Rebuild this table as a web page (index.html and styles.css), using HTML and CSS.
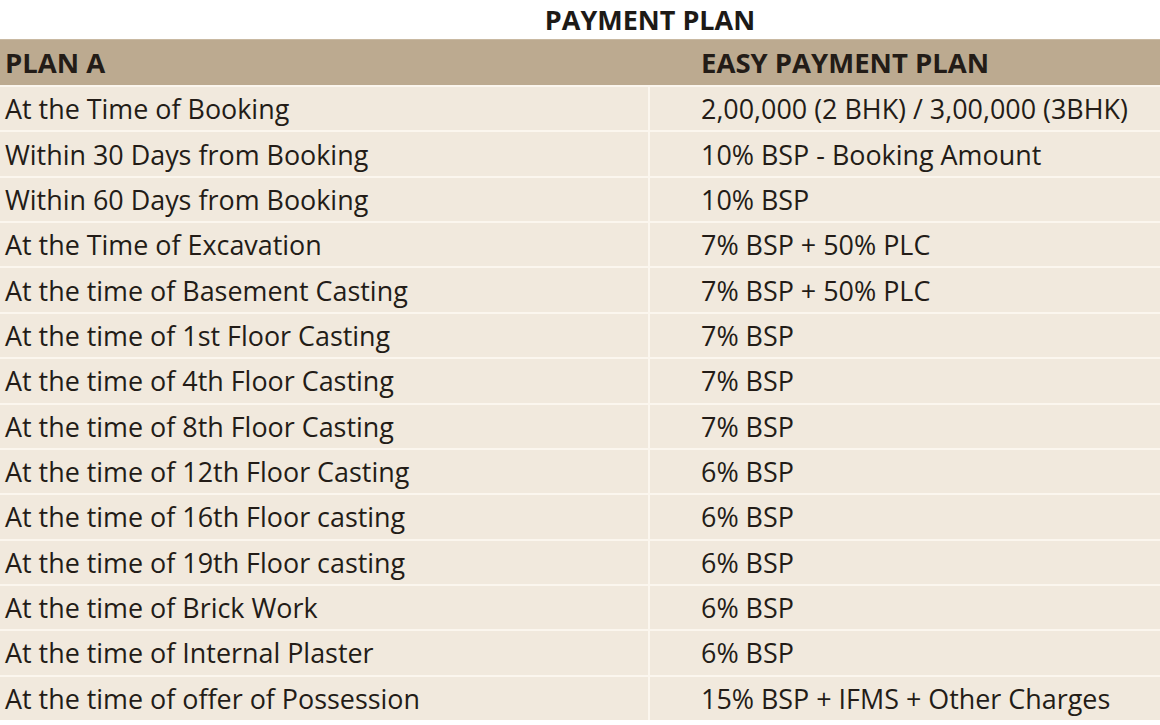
FILE: index.html
```html
<!DOCTYPE html>
<html>
<head>
<meta charset="utf-8">
<link rel="stylesheet" href="styles.css">
</head>
<body>
<div class="title">PAYMENT PLAN</div>
<div class="head">
  <div class="c1">PLAN A</div>
  <div class="c2">EASY PAYMENT PLAN</div>
</div>
<div class="rows">
  <div class="c1">At the Time of Booking</div><div class="c2">2,00,000 (2 BHK) / 3,00,000 (3BHK)</div>
  <div class="c1">Within 30 Days from Booking</div><div class="c2">10% BSP - Booking Amount</div>
  <div class="c1">Within 60 Days from Booking</div><div class="c2">10% BSP</div>
  <div class="c1">At the Time of Excavation</div><div class="c2">7% BSP + 50% PLC</div>
  <div class="c1">At the time of Basement Casting</div><div class="c2">7% BSP + 50% PLC</div>
  <div class="c1">At the time of 1st Floor Casting</div><div class="c2">7% BSP</div>
  <div class="c1">At the time of 4th Floor Casting</div><div class="c2">7% BSP</div>
  <div class="c1">At the time of 8th Floor Casting</div><div class="c2">7% BSP</div>
  <div class="c1">At the time of 12th Floor Casting</div><div class="c2">6% BSP</div>
  <div class="c1">At the time of 16th Floor casting</div><div class="c2">6% BSP</div>
  <div class="c1">At the time of 19th Floor casting</div><div class="c2">6% BSP</div>
  <div class="c1">At the time of Brick Work</div><div class="c2">6% BSP</div>
  <div class="c1">At the time of Internal Plaster</div><div class="c2">6% BSP</div>
  <div class="c1">At the time of offer of Possession</div><div class="c2">15% BSP + IFMS + Other Charges</div>
</div>
</body>
</html>
```
FILE: styles.css
```css
html, body {
  margin: 0;
  padding: 0;
  background: #ffffff;
}
body {
  font-family: "Open Sans", "Noto Sans", sans-serif;
  color: #231c17;
  width: 1160px;
  height: 725px;
  overflow: hidden;
}
.title {
  height: 39px;
  display: flex;
  align-items: center;
  justify-content: center;
  padding-left: 140px;
  font-weight: 700;
  font-size: 27px;
  color: #1d1a17;
}
.head {
  display: grid;
  grid-template-columns: 648px 1fr;
  column-gap: 2px;
  height: 48px;
  background: #bcaa90;
  font-weight: 700;
  font-size: 27.5px;
  border-bottom: 2px solid #fbf6ee;
  border-top: 1px solid #c9b9a2;
  box-sizing: border-box;
}
.head > div {
  display: flex;
  align-items: center;
}
.rows {
  display: grid;
  grid-template-columns: 648px 1fr;
  grid-auto-rows: 43.36px;
  gap: 2px;
  background: #fbf6ee;
  font-size: 26.9px;
}
.rows > div {
  background: #f1e9dd;
  display: flex;
  align-items: center;
}
.c1 {
  padding-left: 5px;
}
.c2 {
  padding-left: 51px;
}
```
